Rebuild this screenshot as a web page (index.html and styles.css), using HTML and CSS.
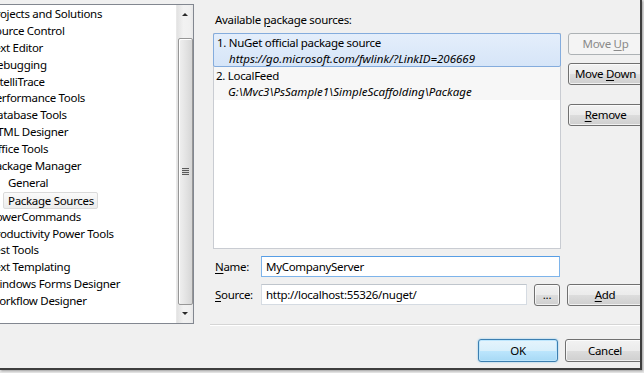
FILE: index.html
```html
<!DOCTYPE html>
<html>
<head>
<meta charset="utf-8">
<link rel="stylesheet" href="styles.css">
</head>
<body>
<div class="window">
  <div class="main">
    <div class="tree">
      <ul class="tree-list">
        <li class="top">Projects and Solutions</li>
        <li class="top">Source Control</li>
        <li class="top">Text Editor</li>
        <li class="top">Debugging</li>
        <li class="top">IntelliTrace</li>
        <li class="top">Performance Tools</li>
        <li class="top">Database Tools</li>
        <li class="top">HTML Designer</li>
        <li class="top">Office Tools</li>
        <li class="top">Package Manager</li>
        <li class="child">General</li>
        <li class="child"><span class="sel">Package Sources</span></li>
        <li class="top">PowerCommands</li>
        <li class="top">Productivity Power Tools</li>
        <li class="top">Test Tools</li>
        <li class="top">Text Templating</li>
        <li class="top">Windows Forms Designer</li>
        <li class="top">Workflow Designer</li>
      </ul>
      <div class="vscroll">
        <div class="arrow up"></div>
        <div class="thumb"><div class="grip"></div></div>
        <div class="arrow down"></div>
      </div>
    </div>
    <div class="right">
      <div class="caption">Available <u>p</u>ackage sources:</div>
      <div class="sources-row">
        <div class="listbox">
          <div class="item selected">
            <div>1. NuGet official package source</div>
            <div class="url">https://go.microsoft.com/fwlink/?LinkID=206669</div>
          </div>
          <div class="item alt">
            <div>2. LocalFeed</div>
            <div class="url">G:\Mvc3\PsSample1\SimpleScaffolding\Package</div>
          </div>
        </div>
        <div class="side-buttons">
          <button class="btn disabled">Move <u>U</u>p</button>
          <button class="btn">Move <u>D</u>own</button>
          <button class="btn gap"><u>R</u>emove</button>
        </div>
      </div>
      <div class="field-row name-row">
        <label class="lbl"><u>N</u>ame:</label>
        <div class="input focused">MyCompanyServer</div>
      </div>
      <div class="field-row">
        <label class="lbl"><u>S</u>ource:</label>
        <div class="input narrow">http://localhost:55326/nuget/</div>
        <button class="btn dots">...</button>
        <button class="btn add"><u>A</u>dd</button>
      </div>
    </div>
  </div>
  <div class="footer">
    <button class="btn ok">OK</button>
    <button class="btn cancel">Cancel</button>
  </div>
</div>
</body>
</html>
```
FILE: styles.css
```css
* { box-sizing: border-box; }
html, body { margin: 0; padding: 0; }
body {
  width: 644px;
  height: 373px;
  background: #e6e6e6;
  font-family: "Noto Sans", "Open Sans", sans-serif;
  font-size: 11.5px;
  letter-spacing: -0.3px;
  color: #000;
  overflow: hidden;
}
u { text-decoration: underline; text-underline-offset: 2px; }

.window {
  width: 642px;
  height: 370px;
  background: #f0f0f0;
  border-right: 2px solid #3e3e3e;
  border-bottom: 2px solid #3e3e3e;
  box-shadow: 1px 1px 2px rgba(0,0,0,0.3);
  display: flex;
  flex-direction: column;
  overflow: hidden;
}

.main {
  display: flex;
  height: 324px;
  flex: none;
}

/* tree */
.tree {
  flex: none;
  margin-top: 4px;
  width: 194px;
  height: 320px;
  background: #fff;
  border: 1px solid #828790;
  border-left: none;
  display: flex;
  overflow: hidden;
}
.tree-list {
  list-style: none;
  margin: 1px 0 0 0;
  padding: 0;
  flex: 1;
  overflow: hidden;
}
.tree-list li {
  height: 16.9px;
  line-height: 16.9px;
  white-space: nowrap;
}
.tree-list li.top { margin-left: -11px; }
.tree-list li.child { padding-left: 8px; }
.tree-list .sel {
  display: inline-block;
  margin-left: -5px;
  padding: 0 3px 0 4px;
  height: 17px;
  line-height: 15px;
  border: 1px solid #dadada;
  border-radius: 2px;
  background: linear-gradient(#fafafa, #ececec);
}

.vscroll {
  flex: none;
  width: 17px;
  background: linear-gradient(to right, #e2e2e2, #f2f2f2 40%, #f0f0f0 80%, #e6e6e6);
  border-left: 1px solid #e8e8e8;
  display: flex;
  flex-direction: column;
  align-items: center;
}
.arrow {
  width: 0; height: 0;
  border-left: 3px solid transparent;
  border-right: 3px solid transparent;
}
.arrow.up {
  margin-top: 8px;
  border-bottom: 3px solid #2a2a2a;
}
.arrow.down {
  margin-top: 7px;
  border-top: 3px solid #2a2a2a;
}
.thumb {
  margin-top: 22px;
  width: 15px;
  height: 267px;
  border: 1px solid #979797;
  border-radius: 2px;
  background: linear-gradient(to right, #f0f0f0, #e4e4e4 50%, #d6d6d6);
  box-shadow: inset 1px 1px 0 #fff;
  display: flex;
  align-items: center;
  justify-content: center;
}
.grip {
  width: 7px;
  height: 7px;
  background: repeating-linear-gradient(#5a5a5a 0 1px, #d8d8d8 1px 2px);
}

/* right panel */
.right {
  flex: none;
  width: 460px;
  padding-left: 19px;
  display: flex;
  flex-direction: column;
}
.caption {
  margin-top: 11px;
  height: 17px;
  line-height: 17px;
  padding-left: 2px;
}
.sources-row {
  display: flex;
  margin-top: 5px;
}
.listbox {
  width: 348px;
  height: 216px;
  background: #fff;
  border: 1px solid #c9ccd2;
  flex: none;
}
.item {
  padding: 1px 0 0 2px;
  height: 33px;
  line-height: 16px;
}
.item .url {
  font-style: italic;
  letter-spacing: 0;
  padding-left: 12px;
}
.item.selected {
  margin: -1px -1px 0 -1px;
  height: 34px;
  padding: 1px 0 0 3px;
  border: 1px solid #84acdd;
  border-radius: 2px;
  background: linear-gradient(#e4eefb, #d6e5f8);
}
.item.alt { background: #f7f7f7; }

.side-buttons {
  display: flex;
  flex-direction: column;
  margin-left: 7px;
  margin-top: 0;
  flex: none;
}
.btn {
  font-family: inherit;
  font-size: 11.5px;
  letter-spacing: -0.3px;
  color: #000;
  width: 75px;
  height: 22px;
  padding: 0;
  border: 1px solid #707070;
  border-radius: 3px;
  background: linear-gradient(#f2f2f2 0, #ebebeb 50%, #dddddd 50%, #cfcfcf 100%);
  box-shadow: inset 0 0 0 1px rgba(255,255,255,0.7);
  text-align: center;
  line-height: 18px;
  flex: none;
}
.side-buttons .btn { margin-bottom: 8px; }
.side-buttons .btn.gap { margin-top: 11px; }
.btn.disabled {
  color: #8a8a8a;
  border-color: #adb2b5;
  background: #f4f4f4;
  box-shadow: none;
}

.field-row {
  display: flex;
  align-items: center;
  height: 21px;
  margin-top: 7px;
}
.name-row { margin-top: 7px; }
.lbl {
  width: 48px;
  padding-left: 2px;
  flex: none;
}
.input {
  width: 299px;
  height: 21px;
  background: #fff;
  border: 1px solid #d5dbe2;
  border-top-color: #bfc5cc;
  padding-left: 4px;
  line-height: 19px;
  white-space: nowrap;
  flex: none;
}
.input.focused {
  border-color: #7eb4ea;
  border-top-color: #569de5;
}
.input.narrow { width: 266px; }
.btn.dots {
  width: 26px;
  height: 22px;
  margin-left: 7px;
  line-height: 14px;
}
.btn.add { margin-left: 7px; width: 76px; }

/* footer */
.footer {
  flex: 1;
  margin-left: 210px;
  border-top: 1px solid #d5d5d5;
  box-shadow: inset 0 1px 0 #fff;
  display: flex;
  justify-content: flex-start;
  padding-left: 268px;
  padding-top: 14px;
  gap: 7px;
}
.btn.ok {
  width: 80px;
  height: 23px;
  border-color: #3c7fb1;
  background: linear-gradient(#e5f4fc 0, #d8effb 50%, #bde6fd 50%, #a7d9f5 100%);
  box-shadow: inset 0 0 0 1px #bde6fd, 0 0 2px #7ac3ea;
}
.btn.cancel { width: 80px; height: 23px; }
```
